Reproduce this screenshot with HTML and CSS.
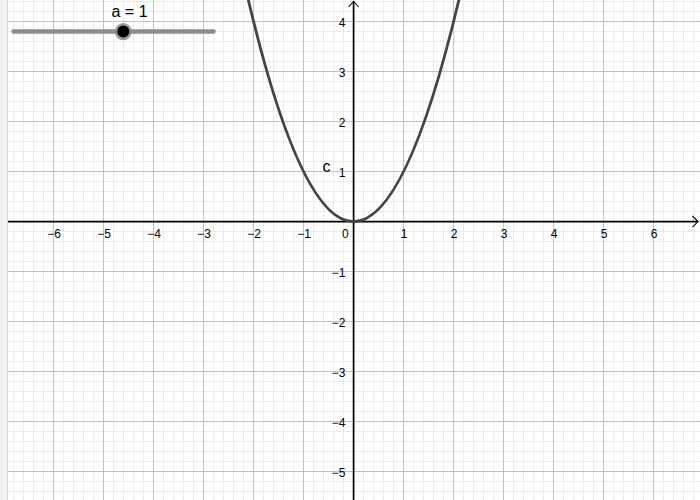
FILE: index.html
```html
<!DOCTYPE html>
<html lang="en">
<head>
<meta charset="utf-8">
<title>Graphing</title>
<link rel="stylesheet" href="styles.css">
</head>
<body>
<div class="app">
  <div class="strip"></div>
  <svg class="graph" width="692" height="500" viewBox="8 0 692 500" xmlns="http://www.w3.org/2000/svg">
    <defs>
      <pattern id="minor" patternUnits="userSpaceOnUse" x="3" y="1" width="10" height="10">
        <path d="M0.5 0V10M0 0.5H10" class="grid-minor"/>
      </pattern>
      <pattern id="major" patternUnits="userSpaceOnUse" x="3" y="21" width="50" height="50">
        <path d="M0.5 0V50M0 0.5H50" class="grid-major"/>
      </pattern>
    </defs>
    <rect x="8" y="0" width="692" height="500" fill="#ffffff"/>
    <rect x="8" y="0" width="692" height="500" fill="url(#minor)"/>
    <rect x="8" y="0" width="692" height="500" fill="url(#major)"/>

    <!-- axes -->
    <path class="axis" d="M8 221.6H698"/>
    <path class="axis" d="M353.6 1V500"/>
    <path class="arrow" d="M692.5 216L698 221.6L692.5 227.2"/>
    <path class="arrow" d="M348.5 7L353.6 1.5L358.7 7"/>

    <!-- x labels -->
    <g class="tick-label x-labels">
      <text x="54" y="238">−6</text>
      <text x="104" y="238">−5</text>
      <text x="154" y="238">−4</text>
      <text x="204" y="238">−3</text>
      <text x="254" y="238">−2</text>
      <text x="304" y="238">−1</text>
      <text x="404" y="238">1</text>
      <text x="454" y="238">2</text>
      <text x="504" y="238">3</text>
      <text x="554" y="238">4</text>
      <text x="604" y="238">5</text>
      <text x="654" y="238">6</text>
    </g>
    <text class="tick-label" x="342" y="238">0</text>

    <!-- y labels -->
    <g class="tick-label y-labels">
      <text x="345.5" y="27">4</text>
      <text x="345.5" y="77">3</text>
      <text x="345.5" y="127">2</text>
      <text x="345.5" y="177">1</text>
      <text x="345.5" y="277">−1</text>
      <text x="345.5" y="327">−2</text>
      <text x="345.5" y="377">−3</text>
      <text x="345.5" y="427">−4</text>
      <text x="345.5" y="477">−5</text>
    </g>

    <!-- parabola y = a x^2 -->
    <path class="curve" d="M243.6 -20.4Q353.6 463.6 463.6 -20.4"/>
    <text class="obj-label" x="322.5" y="171.5">c</text>

    <!-- slider -->
    <text class="obj-label" x="111.5" y="16.5">a = 1</text>
    <path class="slider-line" d="M13.5 31.6H213.5"/>
    <circle class="knob-halo" cx="123.3" cy="31.6" r="8.6"/>
    <circle class="knob" cx="123.3" cy="31.6" r="6"/>
  </svg>
</div>
</body>
</html>
```

FILE: styles.css
```css
html, body {
  margin: 0;
  padding: 0;
  background: #ffffff;
}

.app {
  display: flex;
  width: 700px;
  height: 500px;
  overflow: hidden;
}

.strip {
  width: 7px;
  flex: 0 0 7px;
  background: #f1f1f1;
  border-right: 1px solid #d6d6d6;
}

.graph {
  display: block;
  flex: 0 0 692px;
}

.grid-minor {
  fill: none;
  stroke: #ebebeb;
  stroke-width: 1;
}

.grid-major {
  fill: none;
  stroke: #c2c2c2;
  stroke-width: 1;
}

.axis {
  fill: none;
  stroke: #000000;
  stroke-width: 1.7;
}

.arrow {
  fill: none;
  stroke: #000000;
  stroke-width: 1.1;
}

.tick-label {
  font-family: "Liberation Sans", Arial, sans-serif;
  font-size: 12px;
  fill: #000000;
}

.x-labels text {
  text-anchor: middle;
}

.y-labels text {
  text-anchor: end;
}

.curve {
  fill: none;
  stroke: #444444;
  stroke-width: 2.8;
}

.obj-label {
  font-family: "Liberation Sans", Arial, sans-serif;
  font-size: 16px;
  fill: #000000;
}

.slider-line {
  fill: none;
  stroke: #8c8c8c;
  stroke-width: 4.5;
  stroke-linecap: round;
}

.knob-halo {
  fill: #8a8a8a;
  fill-opacity: 0.85;
}

.knob {
  fill: #000000;
}
```
